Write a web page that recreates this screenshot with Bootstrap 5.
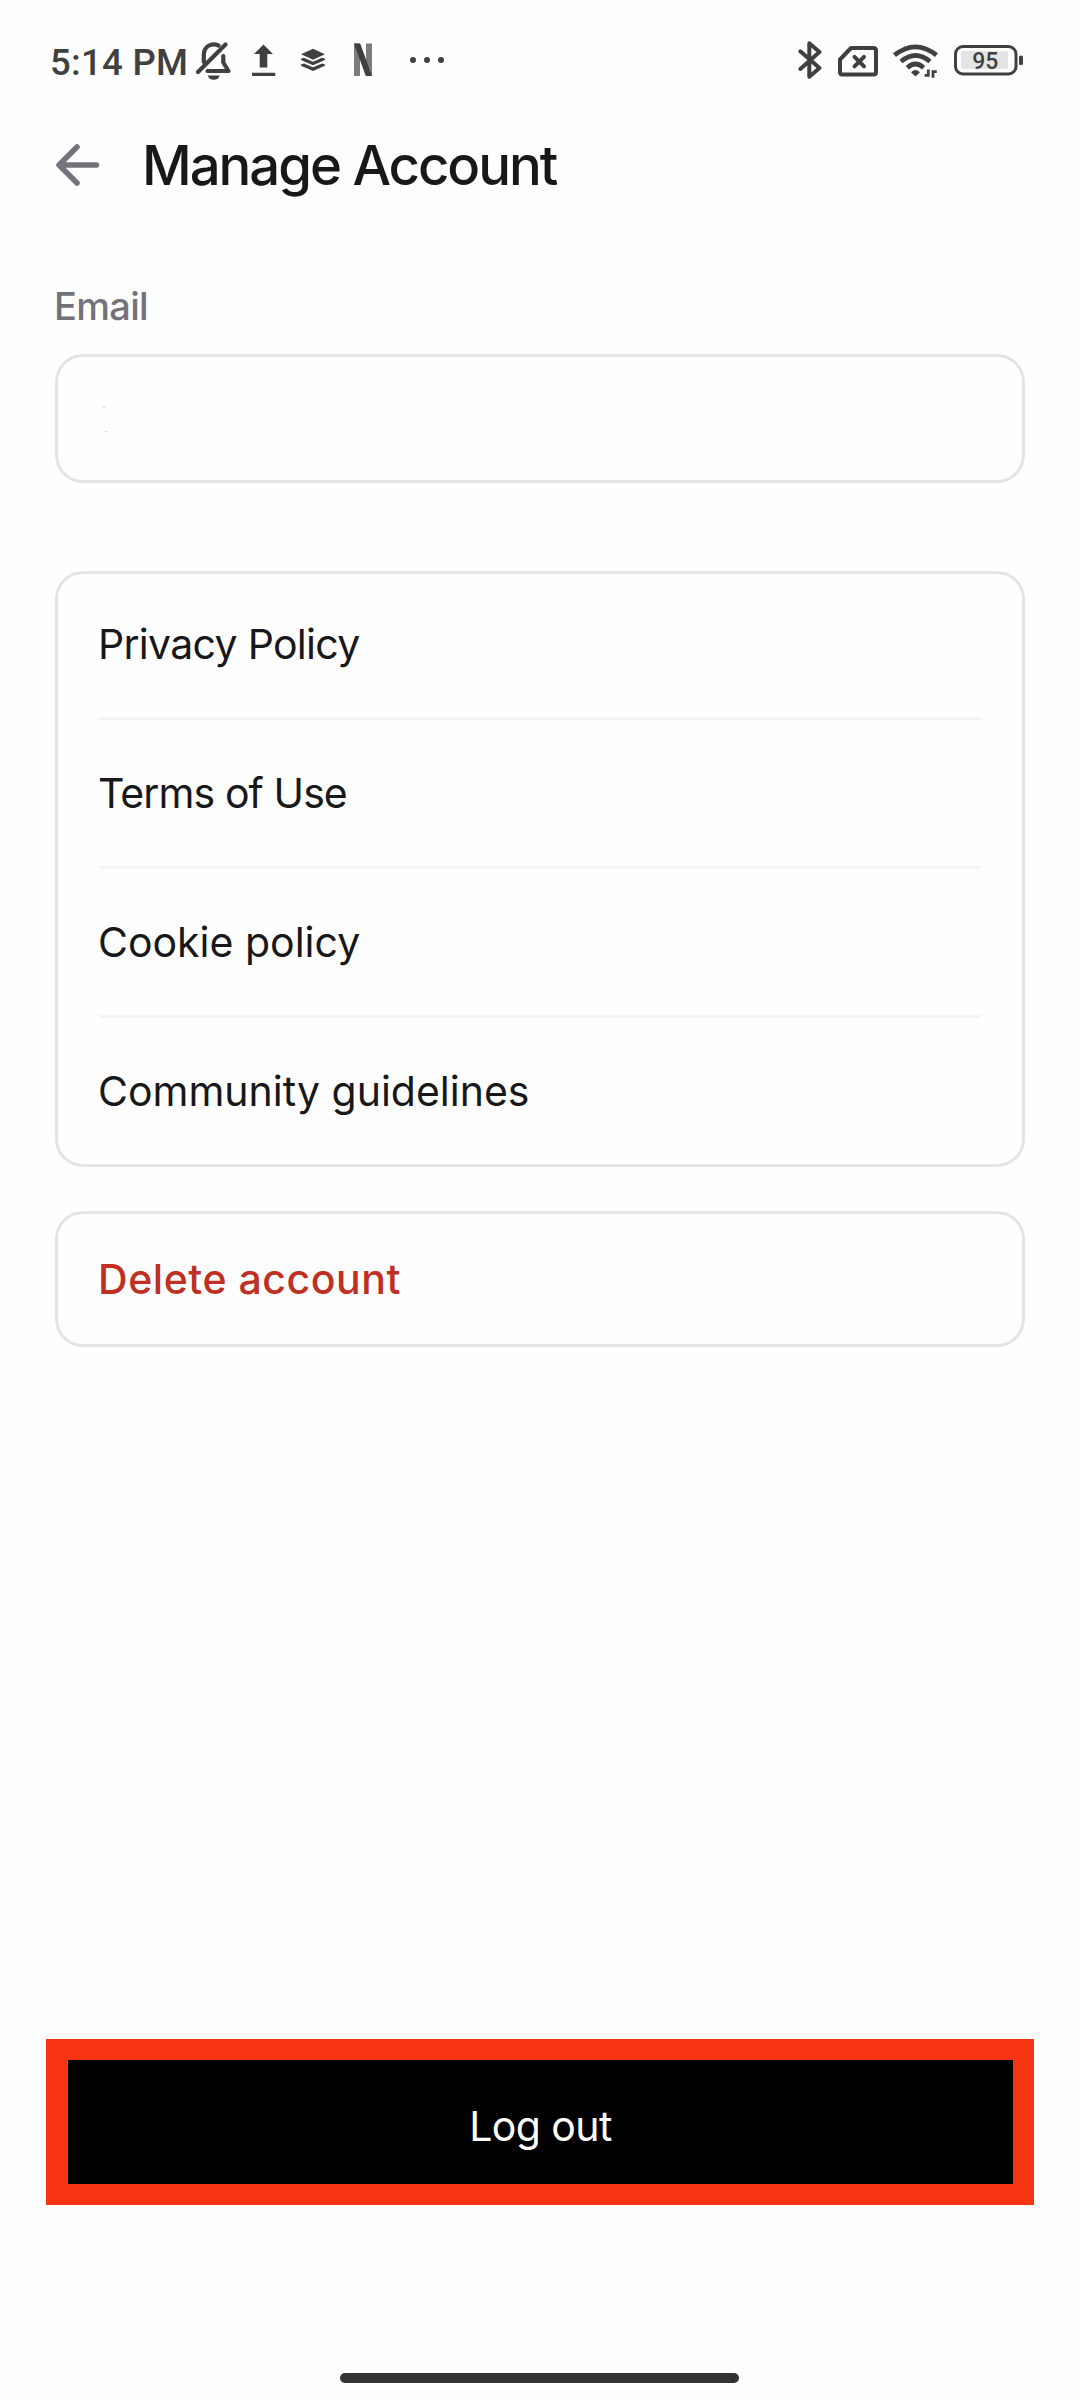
<!DOCTYPE html>
<html lang="en">
<head>
<meta charset="utf-8">
<meta name="viewport" content="width=device-width, initial-scale=1">
<title>Manage Account</title>
<link href="https://cdn.jsdelivr.net/npm/bootstrap@5.3.0/dist/css/bootstrap.min.css" rel="stylesheet">
<style>
  body { background: #fefefe; color: #18181a; font-family: Inter, "Liberation Sans", sans-serif; }
  .screen { width: 1080px; height: 2400px; overflow: hidden; }
  .status-bar { height: 100px; padding: 40px 56px 0 50px; color: #404040; }
  .status-bar svg { display: block; height: 42px; }
  .clock { font: 500 36.5px/42px Roboto, sans-serif; letter-spacing: .3px; width: 144px; white-space: nowrap; padding-top: 2px; }
  .app-header { height: 130px; padding: 0 54px; }
  .app-title { font-size: 54.5px; line-height: 70px; font-weight: 500; letter-spacing: -2.05px; margin-left: 42px; }
  .settings { padding: 0 55px; }
  .field-label { font-size: 38px; line-height: 48px; font-weight: 500; letter-spacing: -.7px; color: #73727a; padding-top: 52px; height: 124px; margin: 0 0 0 -1px; }
  .panel { border: 3px solid #e4e4e6; border-radius: 28px; background: transparent; }
  .email-box { height: 129px; margin-bottom: 88px; padding: 48px 43px; }
  .link-panel { height: 596px; padding: 0 41px; margin-bottom: 44px; }
  .policy-link { height: 149px; padding: 0; font-size: 41px; line-height: 50px; text-indent: -1px; color: #18181a; background: transparent; border: 0; border-bottom: 3px solid #f4f4f5; }
  .policy-link:first-child { height: 146px; padding-bottom: 3px; }
  .policy-link:last-child { border-bottom: 0; height: 146px; }
  .tight { letter-spacing: -.7px; }
  .tighter { letter-spacing: -.9px; }
  .delete-box { height: 136px; padding: 0 40px; font-size: 41px; font-weight: 500; line-height: 50px; letter-spacing: .55px; color: #bf3023; }
  .logout { margin: 692px 46px 0; height: 166px; border: solid #f63411; border-width: 21px 21px 21px 22px; background: #000; color: #fff; border-radius: 0; font-size: 41px; line-height: 50px; letter-spacing: -.6px; padding: 8px 0 0; width: 988px; }
  .home-bar { width: 399px; height: 10px; border-radius: 5px; background: #333; margin: 168px 0 0 340px; }
</style>
</head>
<body>
<main class="screen d-flex flex-column">
  <header class="status-bar d-flex justify-content-between flex-shrink-0">
    <div class="d-flex">
      <span class="clock">5:14 PM</span>
      <svg width="46" viewBox="194 40 46 42" fill="none" stroke="#404040" stroke-width="4.200" stroke-linecap="round" stroke-linejoin="round">
        <path d="M198 72L225.500 44.500"/>
        <path d="M203.800 62V55.500C203.800 46 211.500 42.500 218.500 45.500"/>
        <path d="M223.300 56V62.500L228.500 71H207.500"/>
        <path d="M208 75.500H219.500A5.700 4.300 0 0 1 208 75.500Z" fill="#404040" stroke="none"/>
      </svg>
      <svg width="50" viewBox="240 40 50 42" fill="#404040"><path d="M263.500 44.500L273 54H267.300V67.500H259.700V54H254ZM252 72.800H275.200V76H252Z"/></svg>
      <svg width="50" viewBox="290 40 50 42" fill="#404040"><path d="M313 48.700L325 54.200L313 59.800L301 54.200Z"/><path d="M301 58.800L304 57.800L313 61.800L322 57.800L325 58.800V60L313 65.300L301 60Z"/><path d="M301 64.500L304 63.500L313 67.300L322 63.500L325 64.500V65.700L313 71L301 65.700Z"/></svg>
      <svg width="50" viewBox="340 40 50 42"><path d="M354 43.500H360V76H354ZM366 43.500H372V76H366Z" fill="#7b7b7b"/><path d="M354 43.500H360.200L372 76H365.800Z" fill="#404040"/></svg>
      <svg width="60" viewBox="390 40 60 42" fill="#404040"><circle cx="413" cy="60" r="3"/><circle cx="427" cy="60" r="3"/><circle cx="441" cy="60" r="3"/></svg>
    </div>
    <div class="d-flex">
      <svg width="34" viewBox="796 40 34 42" fill="none" stroke="#404040" stroke-width="4" stroke-linecap="round" stroke-linejoin="round"><path d="M800.300 51.300L819.500 68L809.300 76.800V43.200L819.500 52L800.300 69"/></svg>
      <svg width="58" viewBox="830 40 58 42" fill="none" stroke="#404040" stroke-width="4" stroke-linecap="round" stroke-linejoin="round"><path d="M851 48H873.500Q876 48 876 50.500V72Q876 74.500 873.500 74.500H842.500Q840 74.500 840 72V59.500Z"/><path d="M854.500 56.800L864 66.300M864 56.800L854.500 66.300"/></svg>
      <svg width="58" viewBox="888 40 58 42" fill="none" stroke="#404040" stroke-width="4.800">
        <path d="M894.500 55.200Q915.500 38.500 936.500 55.200M901 61.500Q915.500 49.500 930 61.500M907.300 67.700Q915.500 60.500 923.700 67.700"/>
        <path d="M915.500 76.500L911 72.300Q915.500 67.500 920 72.300Z" fill="#404040" stroke="none"/>
        <path d="M924.700 75.300H928.300V69.500M933 77.800V71.700H936.800" stroke-width="2.800"/>
      </svg>
      <svg width="78" viewBox="946 40 78 42"><rect x="955.500" y="46.500" width="60.500" height="27.500" rx="7.500" fill="none" stroke="#404040" stroke-width="3"/><rect x="961" y="51" width="47" height="18" rx="2" fill="#e4e4e4"/><rect x="1019" y="55.500" width="4" height="9.500" rx="1.500" fill="#404040"/><text x="985.300" y="69" text-anchor="middle" font-family="Roboto" font-weight="500" font-size="23" fill="#404040">95</text></svg>
    </div>
  </header>

  <div class="app-header d-flex align-items-center flex-shrink-0">
    <svg width="46" height="46" viewBox="54 142 46 46" fill="none" stroke="#74737b" stroke-width="5.500" stroke-linecap="round" stroke-linejoin="round"><path d="M96.500 165H59.500M77 147L59 165L77 183"/></svg>
    <h1 class="app-title mb-0">Manage Account</h1>
  </div>

  <section class="settings">
    <label class="field-label d-block">Email</label>
    <div class="panel email-box"><svg class="d-block" width="12" height="28" viewBox="0 0 12 28" fill="#d4d4d4"><path d="M2 2h2v1h-2zM4 26h2v1h-2z"/></svg></div>
    <div class="panel link-panel list-group">
      <a class="policy-link list-group-item d-flex align-items-center tight">Privacy Policy</a>
      <a class="policy-link list-group-item d-flex align-items-center tighter">Terms of Use</a>
      <a class="policy-link list-group-item d-flex align-items-center">Cookie policy</a>
      <a class="policy-link list-group-item d-flex align-items-center">Community guidelines</a>
    </div>
    <div class="panel delete-box d-flex align-items-center">Delete account</div>
  </section>

  <button class="logout btn flex-shrink-0">Log out</button>
  <div class="home-bar flex-shrink-0"></div>
</main>
<script src="https://cdn.jsdelivr.net/npm/bootstrap@5.3.0/dist/js/bootstrap.bundle.min.js"></script>
</body>
</html>
